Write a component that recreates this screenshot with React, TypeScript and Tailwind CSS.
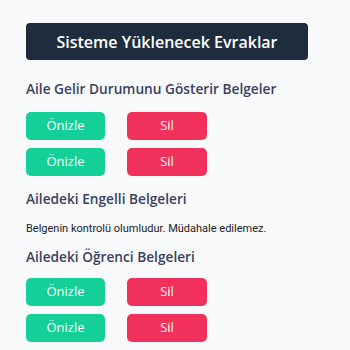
import React from "react";

const Btns = () => (
  <div className="flex flex-col gap-2">
    {[0, 1].map((i) => (
      <div key={i} className="flex gap-[22px]">
        <button className="w-[79px] h-[28px] rounded-[5px] bg-[#14cf97] text-white text-[13px] font-medium">Önizle</button>
        <button className="w-[80px] h-[28px] rounded-[5px] bg-[#f1305c] text-white text-[13px] font-medium">Sil</button>
      </div>
    ))}
  </div>
);

const H = ({ children }: { children: React.ReactNode }) => (
  <h2 className="text-[13.7px] font-semibold text-[#3b415f] leading-none">{children}</h2>
);

export default function App() {
  return (
    <div className="w-[350px] h-[350px] bg-[#f7f9fb] px-[26px] pt-[23px] overflow-hidden" style={{ fontFamily: '"Open Sans", "Noto Sans", sans-serif' }}>
      <div className="w-[282px] h-[37px] rounded-[4px] bg-[#1e2d3e] flex items-center justify-center text-white text-[16px] font-semibold">
        Sisteme Yüklenecek Evraklar
      </div>
      <div className="mt-[22px]"><H>Aile Gelir Durumunu Gösterir Belgeler</H></div>
      <div className="mt-[16px]"><Btns /></div>
      <div className="mt-[16px]"><H>Ailedeki Engelli Belgeleri</H></div>
      <p className="mt-[18px] text-[11px] text-[#222] leading-none" style={{ fontFamily: 'Roboto, sans-serif' }}>Belgenin kontrolü olumludur. Müdahale edilemez.</p>
      <div className="mt-[16px]"><H>Ailedeki Öğrenci Belgeleri</H></div>
      <div className="mt-[14px]"><Btns /></div>
    </div>
  );
}
